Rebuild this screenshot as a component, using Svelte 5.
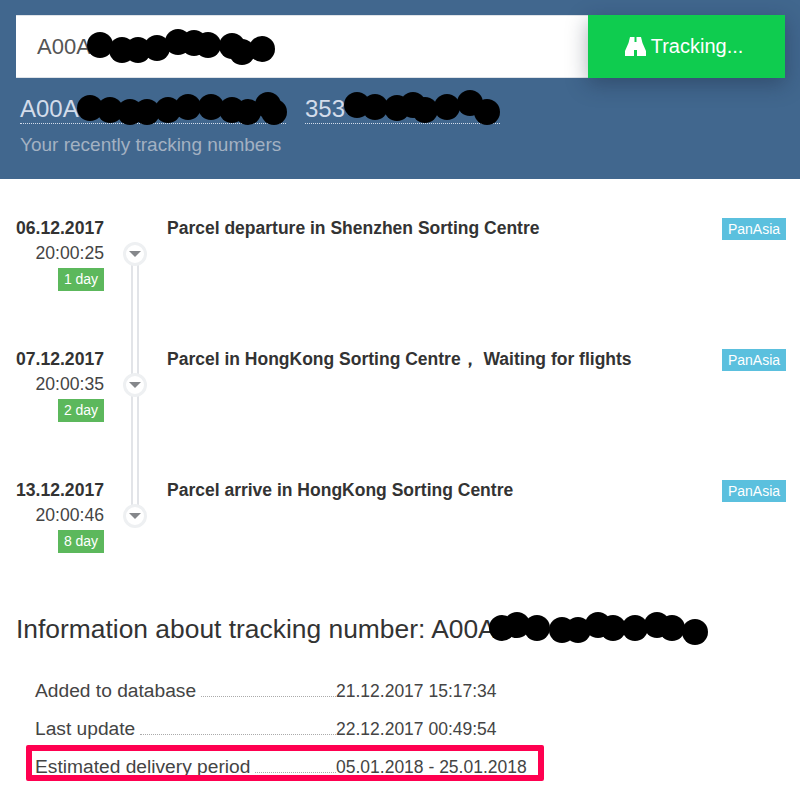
<script>
  const events = [
    { date: '06.12.2017', time: '20:00:25', days: '1 day', title: 'Parcel departure in Shenzhen Sorting Centre' },
    { date: '07.12.2017', time: '20:00:35', days: '2 day', title: 'Parcel in HongKong Sorting Centre， Waiting for flights' },
    { date: '13.12.2017', time: '20:00:46', days: '8 day', title: 'Parcel arrive in HongKong Sorting Centre' }
  ];
  const info = [
    { label: 'Added to database', value: '21.12.2017 15:17:34' },
    { label: 'Last update', value: '22.12.2017 00:49:54' },
    { label: 'Estimated delivery period', value: '05.01.2018 - 25.01.2018', marked: true }
  ];
  const blobs = [
    [100,45],[122,50],[138,50],[157,48],[178,42],[194,43],[208,45],[232,46],[242,52],[262,49],
    [90,108],[110,110],[130,112],[147,112],[168,110],[188,107],[211,107],[232,110],[248,112],[268,105],[274,112],
    [357,105],[375,107],[397,108],[413,105],[425,110],[447,107],[470,103],[487,112],
    [502,628],[517,625],[537,628],[562,630],[578,630],[598,625],[613,628],[635,628],[657,625],[672,628],[695,632]
  ];
</script>

<div class="page">
  <header class="hero">
    <div class="search">
      <div class="input">A00A</div>
      <div class="btn">
        <svg class="bino" viewBox="0 0 21 19" width="21" height="19" aria-hidden="true">
          <path fill="#fff" d="M5 0H9.5V5H11.5V0H16L17.5 6L21 14V19H12V13H9V19H0V14L3.5 6Z"/>
        </svg>
        <span>Tracking...</span>
      </div>
    </div>
    <div class="recent">
      <span class="num n1">A00A</span>
      <span class="num n2">353</span>
    </div>
    <div class="hint">Your recently tracking numbers</div>
  </header>

  <section class="timeline">
    {#each events as e, i}
      <div class="event">
        <div class="when">
          <div class="date">{e.date}</div>
          <div class="time">{e.time}</div>
          <div class="days">{e.days}</div>
        </div>
        <div class="rail" class:last={i === events.length - 1}>
          <div class="dot"><i></i></div>
        </div>
        <div class="title">{e.title}</div>
        <div class="carrier">PanAsia</div>
      </div>
    {/each}
  </section>

  <section class="info">
    <h2>Information about tracking number: A00A</h2>
    <div class="rows">
      {#each info as r}
        <div class="row" class:marked={r.marked}>
          <span class="label">{r.label}</span>
          <span class="leader"></span>
          <span class="value">{r.value}</span>
        </div>
      {/each}
    </div>
  </section>

  <svg class="scribble" width="800" height="786" aria-hidden="true">
    {#each blobs as b}
      <circle cx={b[0]} cy={b[1]} r="13" fill="#000" />
    {/each}
  </svg>
</div>

<style>
  :global(body) { margin: 0; background: #fff; }
  .page {
    position: relative;
    width: 800px;
    height: 786px;
    overflow: hidden;
    font-family: "Liberation Sans", Arial, sans-serif;
    color: #333;
  }
  .hero {
    height: 179px;
    box-sizing: border-box;
    padding: 15px 15px 0 16px;
    background: #41678e;
  }
  .search { display: flex; height: 63px; }
  .input {
    flex: 1;
    background: #fff;
    border: 1px solid #dfe3e8;
    border-width: 1px 0;
    box-sizing: border-box;
    padding-left: 21px;
    font-size: 22px;
    line-height: 61px;
    color: #555;
  }
  .btn {
    width: 197px;
    box-sizing: border-box;
    padding-right: 5px;
    display: flex;
    align-items: center;
    justify-content: center;
    gap: 5px;
    background: #0fcc4f;
    color: #fff;
    font-size: 20px;
    box-shadow: 0 6px 20px rgba(20, 30, 50, 0.35);
    position: relative;
  }
  .bino { margin-top: -1px; }
  .recent { display: flex; gap: 19px; margin: 16px 0 0 4px; }
  .num {
    display: block;
    font-size: 24px;
    line-height: 29px;
    color: #d3dcea;
    border-bottom: 1px dotted #d3dcea;
  }
  .n1 { width: 266px; }
  .n2 { width: 195px; }
  .hint { margin: 9px 0 0 4px; font-size: 19px; line-height: 24px; color: #a3b1c2; }

  .timeline { padding-top: 39px; }
  .event {
    display: grid;
    grid-template-columns: 104px 63px 1fr 64px;
    height: 131px;
    padding: 0 14px 0 0;
    box-sizing: border-box;
  }
  .when { text-align: right; }
  .date { font-weight: 700; font-size: 17.6px; line-height: 20px; color: #333; }
  .time { font-size: 17.6px; line-height: 20px; margin-top: 5px; color: #444; }
  .days {
    display: inline-block;
    width: 46px;
    height: 23px;
    margin-top: 5px;
    background: #5cb85c;
    color: #fff;
    font-size: 14px;
    line-height: 23px;
    text-align: center;
  }
  .rail { position: relative; }
  .rail::before {
    content: "";
    position: absolute;
    left: 27px;
    top: 37px;
    bottom: -37px;
    width: 4px;
    border: 2px solid #e2e4e8;
    border-width: 0 2px;
  }
  .rail.last::before { display: none; }
  .dot {
    position: absolute;
    left: 19px;
    top: 24px;
    width: 24px;
    height: 24px;
    box-sizing: border-box;
    background: #fff;
    border: 3px solid #eef0f2;
    border-radius: 50%;
  }
  .dot i {
    position: absolute;
    left: 3px;
    top: 6px;
    border: 6px solid transparent;
    border-top: 6px solid #85878b;
    border-bottom: 0;
  }
  .title { font-weight: 700; font-size: 17.5px; line-height: 20px; color: #333; }
  .carrier {
    height: 22px;
    background: #5bc0de;
    color: #fff;
    font-size: 14px;
    line-height: 22px;
    text-align: center;
  }

  .info { padding: 0 0 0 16px; }
  h2 { margin: 0; font-weight: 400; font-size: 26.4px; line-height: 36px; color: #333; }
  .rows { margin: 30px 0 0 10px; width: 518px; }
  .row {
    display: flex;
    align-items: baseline;
    box-sizing: border-box;
    height: 38px;
    padding: 0 0 0 9px;
    font-size: 19.2px;
    line-height: 28px;
    color: #444;
  }
  .label { flex: none; }
  .leader { flex: 1; margin-left: 5px; border-bottom: 1px dotted #aaa; }
  .value { flex: none; width: 208px; font-size: 17.5px; }
  .row.marked {
    position: relative;
  }
  .row.marked::after {
    content: "";
    position: absolute;
    inset: -8px 0 10px 0;
    border: 6px solid #ff0050;
    border-radius: 2px;
    box-sizing: border-box;
    pointer-events: none;
  }
  .scribble { position: absolute; left: 0; top: 0; pointer-events: none; }
</style>
